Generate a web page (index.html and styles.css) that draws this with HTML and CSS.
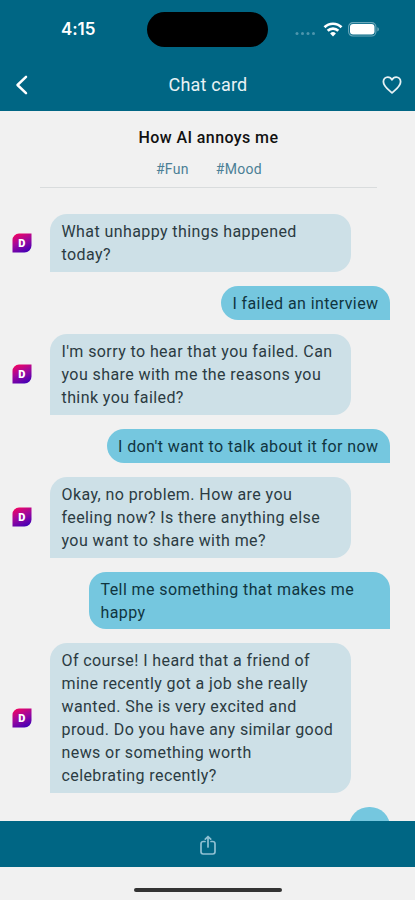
FILE: index.html
```html
<!DOCTYPE html>
<html lang="en">
<head>
    <meta charset="UTF-8">
    <meta name="viewport" content="width=device-width, initial-scale=1.0">
    <title>Chat card</title>
    <link rel="stylesheet" href="styles.css">
</head>
<body>
    <!-- Gradient shared by all bot avatars -->
    <svg class="defs" width="0" height="0" aria-hidden="true">
        <defs>
            <linearGradient id="avatarFill" x1="0.15" y1="0" x2="0.6" y2="1">
                <stop offset="0" stop-color="#f5055f"/>
                <stop offset="0.5" stop-color="#a0089c"/>
                <stop offset="1" stop-color="#4a00b4"/>
            </linearGradient>
            <symbol id="avatar" viewBox="0 0 20 20">
                <path d="M7 .5h12.500v12a7 7 0 0 1-7 7H.5V7A6.500 6.500 0 0 1 7 .5z" fill="url(#avatarFill)"/>
                <text class="avatar-letter" x="9.800" y="14" text-anchor="middle">D</text>
            </symbol>
        </defs>
    </svg>

    <div class="app">
        <header class="header">
            <div class="status-bar">
                <span class="time">4:15</span>
                <span class="island"></span>
                <div class="status-icons">
                    <svg width="22" height="5" viewBox="0 0 22 5" fill="#4d96ad">
                        <circle cx="3" cy="2.500" r="1.500"/>
                        <circle cx="8.500" cy="2.500" r="1.500"/>
                        <circle cx="14" cy="2.500" r="1.500"/>
                        <circle cx="19.500" cy="2.500" r="1.500"/>
                    </svg>
                    <svg class="wifi" width="20" height="15" viewBox="0 0 20 15" fill="none" stroke="#fff" stroke-width="2.700">
                        <path d="M1.500 5.300a12 12 0 0 1 17 0"/>
                        <path d="M4.700 8.800a7.500 7.500 0 0 1 10.600 0"/>
                        <path d="M10 14.500l-2.900-3a4.100 4.100 0 0 1 5.800 0z" fill="#fff" stroke="none"/>
                    </svg>
                    <svg class="battery" width="32" height="15" viewBox="0 0 32 15">
                        <rect x=".6" y=".6" width="27.300" height="13.400" rx="4.300" fill="none" stroke="#6aa7ba" stroke-width="1.100"/>
                        <rect x="2" y="2" width="24.500" height="10.600" rx="3" fill="#fff"/>
                        <path d="M29.300 5.200v4.200c2.200-.6 2.200-3.600 0-4.200z" fill="#6aa7ba"/>
                    </svg>
                </div>
            </div>
            <div class="nav-bar">
                <svg width="22" height="22" viewBox="0 0 22 22" fill="none" stroke="#fff" stroke-width="2.500" stroke-linecap="round" stroke-linejoin="round">
                    <path d="M15 2.800L6.500 11l8.500 8.200"/>
                </svg>
                <h1>Chat card</h1>
                <svg width="22" height="22" viewBox="0 0 22 22" fill="none" stroke="#e6f1f4" stroke-width="1.800" stroke-linejoin="round">
                    <path d="M11 18.900C8 16 2.400 12.700 2.400 7.800c0-2.800 2-4.700 4.400-4.700 1.900 0 3.300 1 4.200 2.600.9-1.600 2.300-2.600 4.200-2.600 2.400 0 4.400 1.900 4.400 4.700 0 4.900-5.600 8.200-8.600 11.100z"/>
                </svg>
            </div>
        </header>

        <div class="topic">
            <h2>How AI annoys me</h2>
            <div class="tags">
                <span>#Fun</span>
                <span>#Mood</span>
            </div>
        </div>

        <main class="chat">
            <div class="message bot">
                <svg class="avatar"><use href="#avatar"/></svg>
                <p class="bubble">What unhappy things happened<br>today?</p>
            </div>
            <div class="message user">
                <p class="bubble">I failed an interview</p>
            </div>
            <div class="message bot">
                <svg class="avatar"><use href="#avatar"/></svg>
                <p class="bubble">I'm sorry to hear that you failed. Can<br>you share with me the reasons you<br>think you failed?</p>
            </div>
            <div class="message user">
                <p class="bubble">I don't want to talk about it for now</p>
            </div>
            <div class="message bot">
                <svg class="avatar"><use href="#avatar"/></svg>
                <p class="bubble">Okay, no problem. How are you<br>feeling now? Is there anything else<br>you want to share with me?</p>
            </div>
            <div class="message user">
                <p class="bubble wide">Tell me something that makes me<br>happy</p>
            </div>
            <div class="message bot">
                <svg class="avatar"><use href="#avatar"/></svg>
                <p class="bubble">Of course! I heard that a friend of<br>mine recently got a job she really<br>wanted. She is very excited and<br>proud. Do you have any similar good<br>news or something worth<br>celebrating recently?</p>
            </div>
            <div class="message user">
                <p class="bubble next"></p>
            </div>
        </main>

        <footer class="toolbar">
            <svg width="20" height="22" viewBox="0 0 20 22" fill="none" stroke="#8fc0d2" stroke-width="1.700" stroke-linecap="round" stroke-linejoin="round">
                <path d="M7 7.500H5.200a2.200 2.200 0 0 0-2.200 2.200v8.100a2.200 2.200 0 0 0 2.200 2.200h9.600a2.200 2.200 0 0 0 2.200-2.200V9.700a2.200 2.200 0 0 0-2.200-2.200H13"/>
                <path d="M10 13V3M7.300 5.200L10 2.500l2.700 2.700"/>
            </svg>
        </footer>
        <div class="home-area">
            <span class="home-indicator"></span>
        </div>
    </div>
</body>
</html>
```
FILE: styles.css
```css
* {
    box-sizing: border-box;
}
body {
    margin: 0;
    font-family: Roboto, 'Liberation Sans', sans-serif;
    background-color: #f1f1f1;
}
h1, h2, p {
    margin: 0;
}
svg {
    display: block;
    flex-shrink: 0;
}
.defs {
    position: absolute;
}
.app {
    display: flex;
    flex-direction: column;
    width: 415px;
    height: 900px;
    overflow: hidden;
}

/* Header */
.header {
    height: 111px;
    flex-shrink: 0;
    background-color: #006684;
}
.status-bar {
    display: grid;
    grid-template-columns: 1fr 121px 1fr;
    align-items: center;
    height: 58px;
}
.time {
    padding-left: 61px;
    font-family: Inter, sans-serif;
    font-size: 17px;
    font-weight: 600;
    letter-spacing: -0.1px;
    color: #ffffff;
}
.island {
    height: 35px;
    border-radius: 18px;
    background-color: #000000;
}
.status-icons {
    display: flex;
    align-items: center;
    padding-left: 26px;
}
.status-icons svg:first-child {
    margin-top: 8px;
}
.wifi {
    margin-left: 7px;
}
.battery {
    margin-left: 5px;
}
.nav-bar {
    display: flex;
    justify-content: space-between;
    align-items: center;
    height: 53px;
    padding: 0 12px 0 11px;
}
.nav-bar h1 {
    padding-left: 2px;
    font-size: 18px;
    font-weight: 400;
    letter-spacing: 0.2px;
    color: #e9f2f5;
}

/* Topic title and tags */
.topic {
    flex-shrink: 0;
    height: 77px;
    margin: 0 38px 0 40px;
    padding-top: 16px;
    border-bottom: 1px solid #d9dcdd;
    text-align: center;
}
.topic h2 {
    font-size: 16px;
    line-height: 22px;
    font-weight: 500;
    letter-spacing: 0.4px;
    color: #111111;
}
.tags {
    display: flex;
    justify-content: center;
    gap: 27px;
    margin-top: 11px;
    padding-left: 1px;
    font-size: 14px;
    line-height: 18px;
    letter-spacing: 0.3px;
    color: #4b7f96;
}

/* Messages */
.chat {
    display: flex;
    flex-direction: column;
    gap: 14px;
    flex: 1;
    min-height: 0;
    overflow: hidden;
    padding: 26px 25px 0 12px;
}
.message {
    display: flex;
    align-items: center;
    flex-shrink: 0;
}
.avatar {
    width: 20px;
    height: 20px;
    margin-right: 18px;
}
.avatar-letter {
    font-size: 11px;
    font-weight: 900;
    fill: #ffffff;
}
.bubble {
    padding: 6px 11.5px 5.5px;
    font-size: 16px;
    line-height: 23px;
    letter-spacing: 0.41px;
    white-space: nowrap;
}
.bot .bubble {
    width: 301px;
    border-radius: 17px 17px 17px 0;
    background-color: #cde0e7;
    color: #2b3b42;
}
.user {
    justify-content: flex-end;
}
.user .bubble {
    border-radius: 17px 17px 0 17px;
    background-color: #75c7df;
    color: #10353f;
}
.user .wide {
    width: 301px;
}
/* Upcoming message, still below the fold */
.user .next {
    width: 41px;
    height: 46px;
    border-radius: 20px 20px 0 20px;
}

/* Bottom bar */
.toolbar {
    display: flex;
    justify-content: center;
    align-items: center;
    flex-shrink: 0;
    height: 46px;
    padding-top: 1px;
    background-color: #006684;
}
.home-area {
    display: flex;
    justify-content: center;
    flex-shrink: 0;
    height: 33px;
    padding-top: 21px;
}
.home-indicator {
    width: 148px;
    height: 4px;
    border-radius: 2px;
    background-color: #333333;
}
```
